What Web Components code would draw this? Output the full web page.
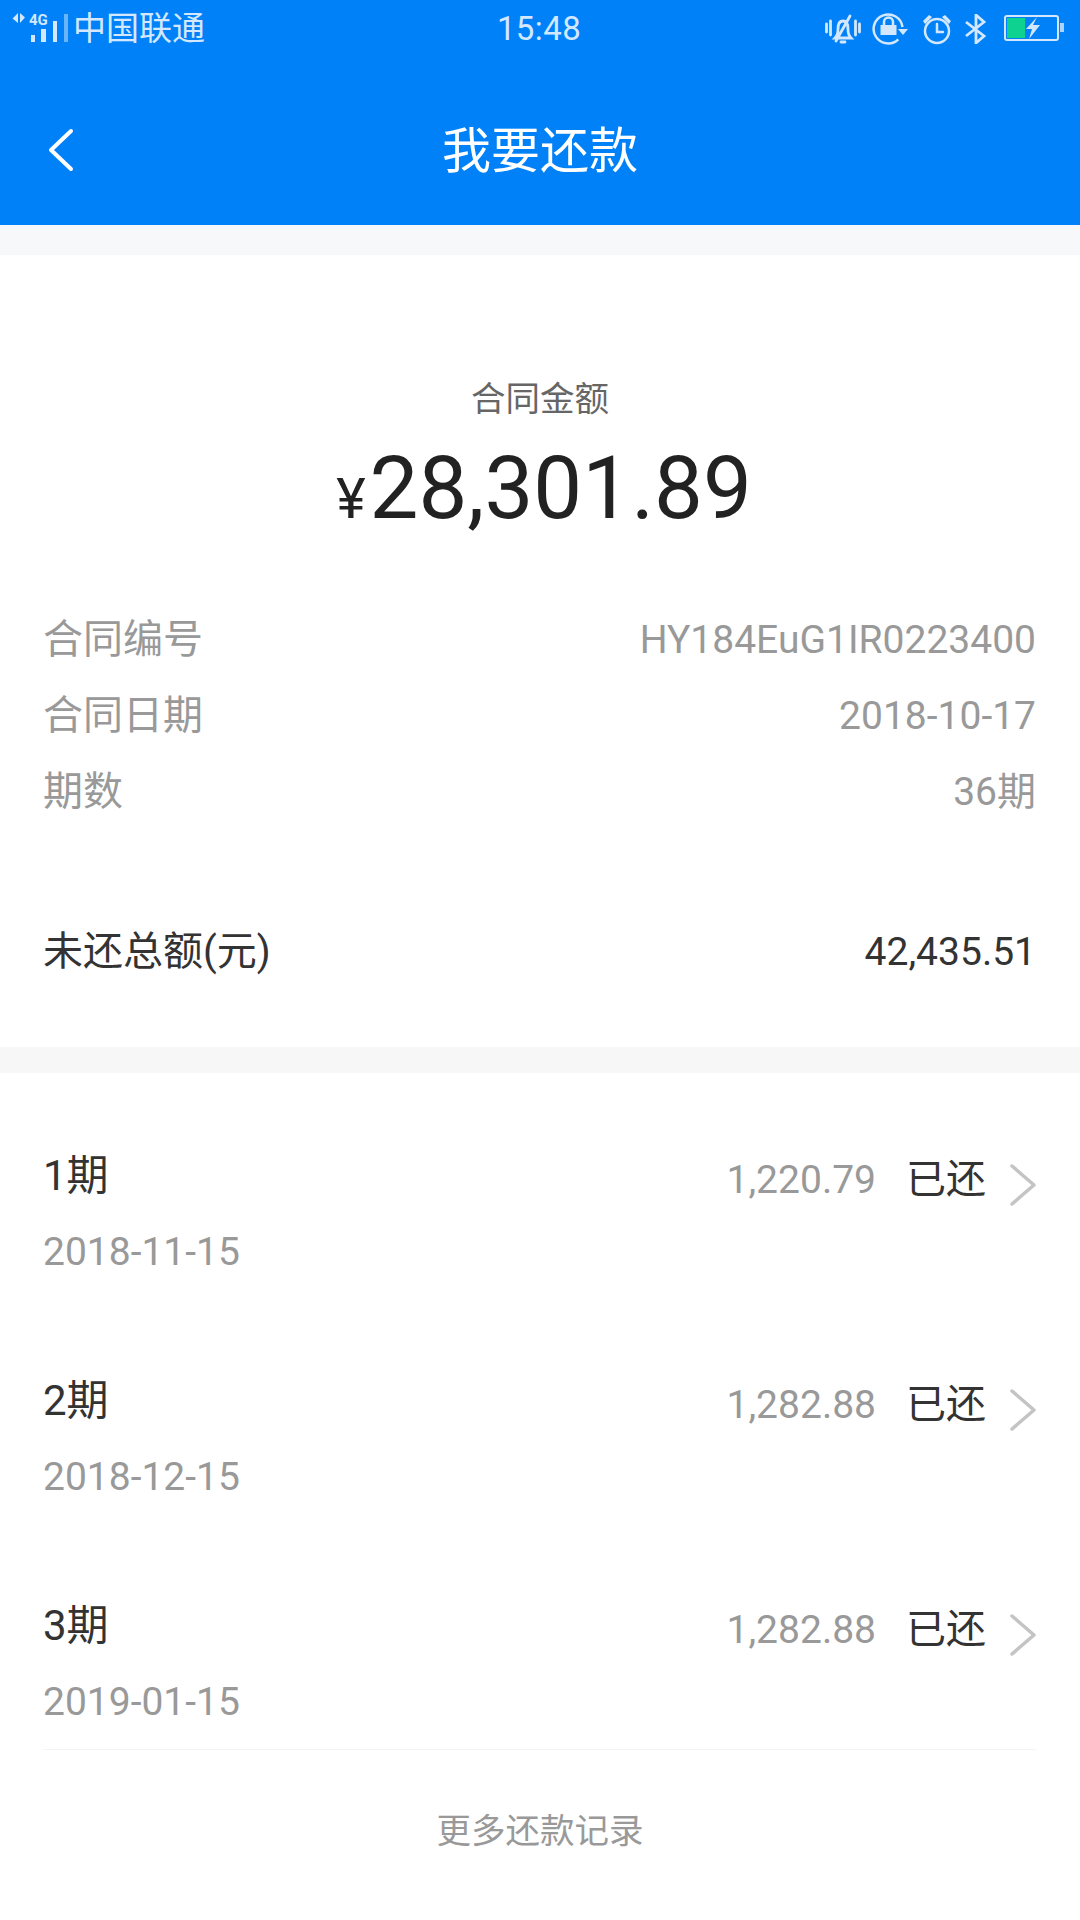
<!DOCTYPE html>
<html lang="zh-CN">
<head>
<meta charset="utf-8">
<title>我要还款</title>
<style>
  html, body { margin: 0; background: #fff; }
  body { font-family: Roboto, "Noto Sans CJK SC", sans-serif; width: 1080px; height: 1920px; overflow: hidden; }
</style>
</head>
<body>
  <status-bar carrier="中国联通" time="15:48"></status-bar>
  <app-header title="我要还款"></app-header>
  <contract-summary amount="28,301.89" label="合同金额">
    <info-row label="合同编号" value="HY184EuG1IR0223400"></info-row>
    <info-row label="合同日期" value="2018-10-17"></info-row>
    <info-row label="期数" value="36期"></info-row>
    <total-row slot="total" label="未还总额(元)" value="42,435.51"></total-row>
  </contract-summary>
  <period-list>
    <period-row name="1期" date="2018-11-15" amount="1,220.79" status="已还"></period-row>
    <period-row name="2期" date="2018-12-15" amount="1,282.88" status="已还"></period-row>
    <period-row name="3期" date="2019-01-15" amount="1,282.88" status="已还"></period-row>
  </period-list>
  <more-link>更多还款记录</more-link>

<script>
const FONT = 'Roboto, "Noto Sans CJK SC", sans-serif';

class StatusBar extends HTMLElement {
  constructor() {
    super();
    this.attachShadow({ mode: 'open' });
  }

  connectedCallback() {
    const carrier = this.getAttribute('carrier') || '';
    const time = this.getAttribute('time') || '';
    this.shadowRoot.innerHTML = `
      <style>
        :host { display: block; background: #0081f8; color: #d3e8fe; font-family: ${FONT}; }
        .bar { height: 56px; box-sizing: border-box; display: grid; grid-template-columns: 1fr auto 1fr; align-items: center; padding: 1px 16px 0 12px; }
        .left { display: flex; align-items: center; gap: 5px; font-size: 33px; line-height: 56px; }
        .time { font-size: 33px; line-height: 56px; letter-spacing: .4px; margin-left: 2px; }
        .right { display: flex; justify-content: flex-end; align-items: center; gap: 11px; }
        svg { display: block; }
      </style>
      <div class="bar">
        <div class="left">
          <svg width="56" height="36" viewBox="0 -4 56 36" style="margin-bottom:5px">
            <path d="M6 0v10L.5 5.500zM8 10V0l5 4.500z" fill="#d3e8fe"/>
            <text x="17" y="12" font-size="15" font-weight="700" font-family="Roboto" fill="#d3e8fe">4G</text>
            <path d="M19 22h4v7h-4zM29 16h5v13h-5zM41 8h4v21h-4z" fill="#d3e8fe"/>
            <path d="M52 1h4v28h-4z" fill="#d3e8fe" opacity=".5"/>
          </svg>
          <span>${carrier}</span>
        </div>
        <div class="time">${time}</div>
        <div class="right">
          <svg width="36" height="30" viewBox="0 0 36 30" fill="none" stroke="#d3e8fe" stroke-width="2.800" stroke-linecap="round">
            <path d="M1.500 10v8M5.500 7v14M34.500 10v8M30.500 7v14"/>
            <path d="M10 24c2-2 3-4 3-9 0-5 2-8 5-8s5 3 5 8c0 5 1 7 3 9zM16 28h4M11 27L25 2"/>
          </svg>
          <svg width="38" height="34" viewBox="0 0 38 34" fill="none" stroke="#d3e8fe" stroke-width="2.500">
            <path d="M26.300 27.300A14.500 14.500 0 1 1 30.500 15"/>
            <path d="M26 17h10l-5 6z" fill="#d3e8fe" stroke="none"/>
            <path d="M8.500 13h16v10h-16z" fill="#d3e8fe" stroke="none"/>
            <path d="M12 13v-3a4.500 4.500 0 0 1 9 0v3"/>
          </svg>
          <svg width="32" height="32" viewBox="0 0 32 32" fill="none" stroke="#d3e8fe" stroke-width="2.500" stroke-linecap="round">
            <circle cx="16" cy="18" r="12"/>
            <path d="M16 11v8h6"/>
            <path d="M2 8l6-6 3 2-7 7zM30 8l-6-6-3 2 7 7z" fill="#d3e8fe" stroke="none"/>
          </svg>
          <svg width="24" height="30" viewBox="0 0 24 30" fill="none" stroke="#d3e8fe" stroke-width="2.800">
            <path d="M2 8l18 14-8 7V1l8 7L2 22"/>
          </svg>
          <svg width="60" height="26" viewBox="0 0 60 26" style="margin:-2px 0 0 5px">
            <rect x="1" y="1" width="53" height="24" rx="2" fill="none" stroke="#d3e8fe" stroke-width="2"/>
            <rect x="3" y="3" width="18" height="20" fill="#0ed28f"/>
            <path d="M56 8h4v9h-4z" fill="#d3e8fe" opacity=".8"/>
            <path d="M33 2L22 14h6l-3 10 11-14h-7l4-8z" fill="#d3e8fe"/>
          </svg>
        </div>
      </div>`;
  }
}

class AppHeader extends HTMLElement {
  constructor() {
    super();
    this.attachShadow({ mode: 'open' });
  }

  connectedCallback() {
    const title = this.getAttribute('title') || '';
    this.removeAttribute('title');
    this.shadowRoot.innerHTML = `
      <style>
        :host { display: block; background: #0081f8; color: #fff; font-family: ${FONT}; }
        .nav { height: 169px; box-sizing: border-box; padding-top: 22px; display: grid; grid-template-columns: 1fr auto 1fr; align-items: center; }
        .back { padding-left: 47px; display: block; margin-bottom: 4px; }
        h1 { margin: 0; font-size: 49px; font-weight: 400; line-height: 60px; }
      </style>
      <div class="nav">
        <svg class="back" width="28" height="44" viewBox="0 0 28 44" fill="none" stroke="#fff" stroke-width="4" stroke-linecap="round" stroke-linejoin="round">
          <path d="M24 3L4 22l20 19"/>
        </svg>
        <h1>${title}</h1>
      </div>`;
  }
}

class InfoRow extends HTMLElement {
  constructor() {
    super();
    this.attachShadow({ mode: 'open' });
  }

  connectedCallback() {
    this.shadowRoot.innerHTML = `
      <style>
        :host { display: flex; justify-content: space-between; align-items: baseline; font-size: 40px; line-height: 75px; color: #999; }
        .value { font-size: 39px; }
      </style>
      <span>${this.getAttribute('label')}</span>
      <span class="value">${this.getAttribute('value')}</span>`;
  }
}

class TotalRow extends HTMLElement {
  constructor() {
    super();
    this.attachShadow({ mode: 'open' });
  }

  connectedCallback() {
    this.shadowRoot.innerHTML = `
      <style>
        :host { display: flex; justify-content: space-between; align-items: baseline; font-size: 40px; line-height: 60px; color: #333; }
        .value { font-size: 39px; }
      </style>
      <span>${this.getAttribute('label')}</span>
      <span class="value">${this.getAttribute('value')}</span>`;
  }
}

class ContractSummary extends HTMLElement {
  constructor() {
    super();
    this.attachShadow({ mode: 'open' });
  }

  connectedCallback() {
    this.shadowRoot.innerHTML = `
      <style>
        :host { display: block; font-family: ${FONT}; background: #fff; border-top: 30px solid #f7f8fa; border-bottom: 26px solid #f7f7f7; }
        .top { padding-top: 120px; text-align: center; }
        .label { font-size: 34.500px; line-height: 48px; color: #666; }
        .amount { display: flex; justify-content: center; align-items: baseline; line-height: 100px; height: 100px; margin-top: 15px; padding-left: 8px; color: #222; font-size: 87px; }
        .amount small { font-size: 56px; margin-right: 4px; }
        .rows { padding: 64px 44px 0 43px; }
        .total { padding: 92px 44px 65px 43px; }
      </style>
      <div class="top">
        <div class="label">${this.getAttribute('label')}</div>
        <div class="amount"><small>¥</small><span>${this.getAttribute('amount')}</span></div>
      </div>
      <div class="rows"><slot></slot></div>
      <div class="total"><slot name="total"></slot></div>`;
  }
}

class PeriodList extends HTMLElement {
  constructor() {
    super();
    this.attachShadow({ mode: 'open' });
  }

  connectedCallback() {
    this.shadowRoot.innerHTML = `
      <style>
        :host { display: block; margin: 0 44px 0 43px; padding-bottom: 1px; font-family: ${FONT}; border-bottom: 1px solid #f4f4f4; }
      </style>
      <slot></slot>`;
  }
}

class PeriodRow extends HTMLElement {
  constructor() {
    super();
    this.attachShadow({ mode: 'open' });
  }

  connectedCallback() {
    this.shadowRoot.innerHTML = `
      <style>
        :host { display: flex; justify-content: space-between; height: 225px; box-sizing: border-box; padding-top: 73px; }
        .name { font-size: 42px; line-height: 60px; color: #333; }
        .date { font-size: 39px; line-height: 60px; margin-top: 16px; color: #999; }
        .right { display: flex; align-items: center; height: 60px; font-size: 40px; line-height: 60px; margin-top: 4px; }
        .amount { color: #999; font-size: 39px; }
        .status { color: #333; margin-left: 30px; }
        svg { margin-left: 24px; margin-top: 10px; display: block; }
      </style>
      <div>
        <div class="name">${this.getAttribute('name')}</div>
        <div class="date">${this.getAttribute('date')}</div>
      </div>
      <div class="right">
        <span class="amount">${this.getAttribute('amount')}</span>
        <span class="status">${this.getAttribute('status')}</span>
        <svg width="26" height="42" viewBox="0 0 26 42" fill="none" stroke="#c4c4c4" stroke-width="3.500" stroke-linecap="round" stroke-linejoin="round">
          <path d="M2 2l22 19L2 40"/>
        </svg>
      </div>`;
  }
}

class MoreLink extends HTMLElement {
  constructor() {
    super();
    this.attachShadow({ mode: 'open' });
  }

  connectedCallback() {
    this.shadowRoot.innerHTML = `
      <style>
        :host { display: block; text-align: center; font-family: ${FONT}; font-size: 34.500px; line-height: 48px; color: #999; padding-top: 57px; }
      </style>
      <slot></slot>`;
  }
}

customElements.define('status-bar', StatusBar);
customElements.define('app-header', AppHeader);
customElements.define('info-row', InfoRow);
customElements.define('total-row', TotalRow);
customElements.define('contract-summary', ContractSummary);
customElements.define('period-list', PeriodList);
customElements.define('period-row', PeriodRow);
customElements.define('more-link', MoreLink);
</script>
</body>
</html>
